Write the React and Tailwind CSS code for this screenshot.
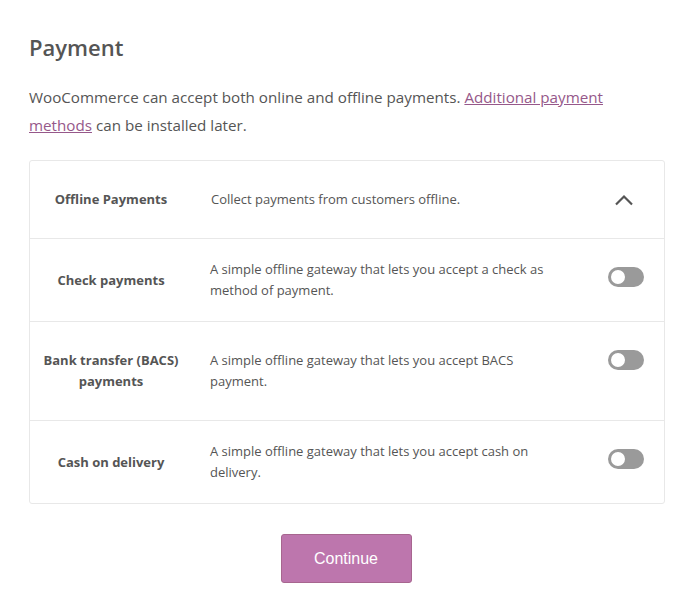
const methods = [
  {
    title: 'Check payments',
    desc: 'A simple offline gateway that lets you accept a check as method of payment.',
    h: 'h-[83px]',
  },
  {
    title: 'Bank transfer (BACS) payments',
    desc: 'A simple offline gateway that lets you accept BACS payment.',
    h: 'h-[99px]',
  },
  {
    title: 'Cash on delivery',
    desc: 'A simple offline gateway that lets you accept cash on delivery.',
    h: 'h-[83px]',
  },
];

function Toggle() {
  return (
    <div className="relative h-[20px] w-[36px] rounded-full bg-[#9a9a9a]">
      <div className="absolute left-[1px] top-[1px] h-[18px] w-[18px] rounded-full border-2 border-[#9a9a9a] bg-white" />
    </div>
  );
}

export default function App() {
  return (
    <div className="min-h-[615px] bg-white px-[29px] pt-[32px] font-['Open_Sans',sans-serif] text-[#555]">
      <h1 className="text-[22px] font-semibold leading-[30px] text-[#555]">Payment</h1>
      <p className="mt-[21px] w-[610px] text-[15.2px] leading-[28px] text-[#555]">
        WooCommerce can accept both online and offline payments.{' '}
        <a href="#" className="text-[#96588a] underline">Additional payment methods</a> can be installed later.
      </p>

      {/* Gateways card */}
      <div className="mt-[21px] w-[636px] rounded-[3px] border border-[#e8e8e8]">
        <div className="flex h-[77px] items-center text-[13px]">
          <div className="w-[162px] text-center font-bold">Offline Payments</div>
          <div className="ml-[19px] flex-1">Collect payments from customers offline.</div>
          <div className="flex w-[80px] justify-center">
            <svg width="20" height="12" viewBox="0 0 20 12" fill="none">
              <path d="M2 10.5L10 2.5L18 10.5" stroke="#555" strokeWidth="2.2" />
            </svg>
          </div>
        </div>
        {methods.map((m) => (
          <div key={m.title} className={`flex items-center border-t border-[#e8e8e8] text-[13px] leading-[21px] ${m.h}`}>
            <div className="w-[162px] px-[10px] text-center font-bold">{m.title}</div>
            <div className="ml-[18px] w-[360px]">{m.desc}</div>
            <div className="ml-[38px] mt-[28px] flex self-start">
              <Toggle />
            </div>
          </div>
        ))}
      </div>

      <div className="mt-[30px] flex justify-center">
        <button className="ml-[2px] h-[49px] w-[131px] rounded-[3px] border border-[#a7668f] bg-[#bd76ad] font-['Liberation_Sans',sans-serif] text-[16px] text-white">
          Continue
        </button>
      </div>
    </div>
  );
}
